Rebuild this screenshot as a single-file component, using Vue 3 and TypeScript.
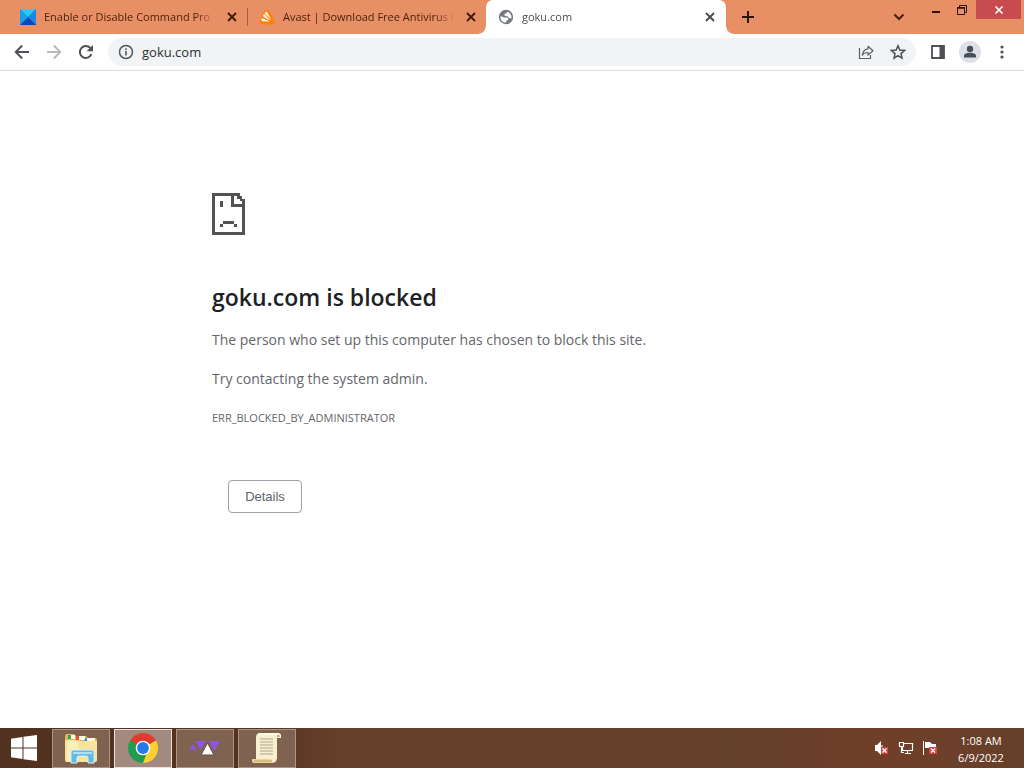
<script setup lang="ts">
import { ref } from 'vue'

interface Tab {
  id: string
  title: string
  icon: 'azure' | 'avast' | 'globe'
}

const tabs: Tab[] = [
  { id: 'cmd', title: 'Enable or Disable Command Pro', icon: 'azure' },
  { id: 'avast', title: 'Avast | Download Free Antivirus (', icon: 'avast' },
  { id: 'goku', title: 'goku.com', icon: 'globe' },
]
const active = ref('goku')
const address = ref('goku.com')
</script>

<template>
  <div class="screen">
    <header class="tabstrip">
      <div v-for="tab in tabs" :key="tab.id" class="tab" :class="{ active: tab.id === active }">
        <svg v-if="tab.icon === 'azure'" class="favicon" viewBox="0 0 16 16" aria-hidden="true">
          <path d="M0 0h16v16H0z" fill="#168de2" />
          <path d="M0 0h16L8 8z" fill="#35c6f4" />
          <path d="M16 0v16L8 8z" fill="#1c86e6" />
          <path d="M0 16 8 8l8 8z" fill="#0b47b4" />
          <path d="M0 0v16l8-8z" fill="#1a9eec" />
        </svg>
        <svg v-else-if="tab.icon === 'avast'" class="favicon" viewBox="0 0 16 16" aria-hidden="true">
          <path d="M6 1.2C7.500 0 9.500.6 10.400 2.500l5 9.600c.8 1.700-.3 3.400-2.200 3.400H3C.8 15.500-.2 13.500.8 11.600L5 2.800z" fill="#ff8108" />
          <path d="M6 4.600c-.4-1.800 1.200-2.600 2.100-1.300l4 7.500zM4.300 6.200c.1-1 1-1.200 1.700-.5l5.500 6.100-6.700-3.800c-.5-.4-.6-1-.5-1.800zM2.400 10.500c-.1-.9.6-1.300 1.500-1l7 3-7-.2c-.9-.1-1.400-.8-1.500-1.800z" fill="#fff" />
        </svg>
        <svg v-else class="favicon" viewBox="0 0 16 16" aria-hidden="true">
          <circle cx="8" cy="8" r="7.200" fill="#75797d" />
          <path d="M9.500 2.800 8.200 4.200 6.500 4.800v1.700L8 7.300h1.700l1 1.700 2.700.4c.5-2.700-.8-5.500-3.900-6.600zM2.400 7.400c-.2 2.800 1.300 5.200 4.200 6.100l1.800-.2v-1.600l1.700-.7.300-1.600-1.700-.9H5.600L4.200 7.500z" fill="#fff" />
        </svg>
        <span class="title">{{ tab.title }}</span>
        <button class="tab-close" type="button" :aria-label="'Close ' + tab.title">
          <svg viewBox="0 0 10 10" width="10" height="10"><path d="m1 1 8 8M9 1 1 9" stroke="currentColor" stroke-width="1.800" /></svg>
        </button>
      </div>
      <button class="new-tab" type="button" aria-label="New tab">
        <svg viewBox="0 0 14 14" width="14" height="14"><path d="M7 1v12M1 7h12" stroke="#2b140a" stroke-width="2" /></svg>
      </button>
      <div class="window-controls">
        <button class="search-tabs" type="button" aria-label="Search tabs">
          <svg viewBox="0 0 12 8" width="12" height="8"><path d="m1.500 1.500 4.500 4.500 4.500-4.500" fill="none" stroke="#43200f" stroke-width="2" /></svg>
        </button>
        <button class="win" type="button" aria-label="Minimize">
          <svg viewBox="0 0 12 12" width="12" height="12"><path d="M2 7h8v2H2z" fill="#2b140a" /></svg>
        </button>
        <button class="win" type="button" aria-label="Restore">
          <svg viewBox="0 0 12 12" width="12" height="12"><path d="M1.500 4h7v6.500h-7zM3.500 3.500v-2h7v7h-2" fill="none" stroke="#2b140a" /><path d="M1 3h8v1.500H1z" fill="#2b140a" /></svg>
        </button>
        <button class="win-close" type="button" aria-label="Close">
          <svg viewBox="0 0 10 10" width="10" height="10"><path d="m1.500 1.500 7 7M8.500 1.500l-7 7" stroke="#fff" stroke-width="1.700" /></svg>
        </button>
      </div>
    </header>

    <nav class="toolbar" aria-label="Browser toolbar">
      <button class="tool" type="button" aria-label="Back">
        <svg viewBox="0 0 16 16" width="16" height="16"><path d="M15 8H2M8.200 1.500 1.700 8l6.500 6.500" fill="none" stroke="#4d5156" stroke-width="1.900" /></svg>
      </button>
      <button class="tool" type="button" aria-label="Forward">
        <svg viewBox="0 0 16 16" width="16" height="16"><path d="M1 8h13M7.800 1.500 14.300 8l-6.500 6.500" fill="none" stroke="#b8babd" stroke-width="1.900" /></svg>
      </button>
      <button class="tool" type="button" aria-label="Reload">
        <svg viewBox="0 0 16 16" width="16" height="16"><path d="M13.400 10.200A6 6 0 1 1 12.400 4l1 1" fill="none" stroke="#4d5156" stroke-width="2" /><path d="M15 1v6.300H8.700z" fill="#4d5156" /></svg>
      </button>
      <div class="omnibox">
        <button class="site-info" type="button" aria-label="View site information">
          <svg viewBox="0 0 16 16" width="16" height="16"><circle cx="8" cy="8" r="6.500" fill="none" stroke="#55595e" stroke-width="1.500" /><path d="M7.200 7h1.600v4.500H7.200zM7.200 4.300h1.600v1.600H7.200z" fill="#55595e" /></svg>
        </button>
        <input v-model="address" class="address" type="text" aria-label="Address and search bar" spellcheck="false" />
        <button class="tool" type="button" aria-label="Share this page">
          <svg viewBox="0 0 16 16" width="16" height="16"><path d="M1.500 4v10.500h11V11" fill="none" stroke="#5b5f64" stroke-width="1.200" /><path d="M10 2.300 15 6.700l-5 4.300V8.500c-2.600 0-4.300.8-5.700 2.700.5-3.500 2.500-5.900 5.700-6.300z" fill="none" stroke="#5b5f64" stroke-width="1.200" stroke-linejoin="round" /></svg>
        </button>
        <button class="tool" type="button" aria-label="Bookmark this tab">
          <svg viewBox="0 0 16 16" width="16" height="16"><path d="m8 1.800 1.800 4.300 4.700.4L11 9.600l1 4.600-4-2.500-4 2.500 1-4.600-3.500-3.100 4.700-.4z" fill="none" stroke="#4d5156" stroke-width="1.500" /></svg>
        </button>
      </div>
      <button class="tool" type="button" aria-label="Side panel">
        <svg viewBox="0 0 16 16" width="16" height="16"><path d="M2 2h12v12H2z" fill="none" stroke="#4d5156" stroke-width="1.800" /><path d="M9.500 1.500H14v13H9.500z" fill="#4d5156" /></svg>
      </button>
      <button class="tool" type="button" aria-label="Profile">
        <svg viewBox="0 0 22 22" width="22" height="22"><circle cx="11" cy="11" r="11" fill="#dde1e7" /><circle cx="11" cy="8" r="3.200" fill="#46505c" /><path d="M5 16.500v-1.700c0-2.200 3.600-3 6-3s6 .8 6 3v1.700z" fill="#46505c" /></svg>
      </button>
      <button class="tool" type="button" aria-label="Menu">
        <svg viewBox="0 0 4 16" width="4" height="16"><g fill="#4d5156"><circle cx="2" cy="3" r="1.600" /><circle cx="2" cy="8" r="1.600" /><circle cx="2" cy="13" r="1.600" /></g></svg>
      </button>
    </nav>

    <main class="page">
      <div class="error">
        <svg class="sad" viewBox="0 0 12 15" preserveAspectRatio="none" shape-rendering="crispEdges" aria-hidden="true">
          <path d="M0 0h10v1h1v1h1v13H0zM1 1v13h10V5H7V1zM8 1v3h3V3h-1V2H9V1z" fill="#535353" fill-rule="evenodd" />
          <path d="M3 3h1v2H3zM4 10h4v1H4zM3 11h1v1H3zM8 11h1v1H8z" fill="#535353" />
        </svg>
        <h1>goku.com is blocked</h1>
        <p>The person who set up this computer has chosen to block this site.</p>
        <p>Try contacting the system admin.</p>
        <div class="code">ERR_BLOCKED_BY_ADMINISTRATOR</div>
        <button class="details" type="button">Details</button>
      </div>
    </main>

    <footer class="taskbar">
      <button class="start" type="button" aria-label="Start">
        <svg viewBox="0 0 26 26" width="26" height="26"><path d="M0 3.700 11.500 2v10.500H0zM12.500 1.800 26 0v12.500H12.500zM0 13.500h11.500V24L0 22.300zM12.500 13.500H26V26l-13.500-1.800z" fill="#fff" /></svg>
      </button>
      <button class="task" type="button" aria-label="File Explorer">
        <svg viewBox="0 0 34 32" width="34" height="32">
          <path d="M1 4q0-2 2-2h7l2 2h10l2 2h7q2 0 2 2v20q0 2-2 2H3q-2 0-2-2z" fill="#d9b75c" />
          <path d="M4 3h6v4H4z" fill="#3ba34d" /><path d="M12 4h7v4h-7z" fill="#e05236" /><path d="M20 6h9v4h-9z" fill="#3a8bd8" />
          <path d="M7 3h4v4H7zM15 4h6v4h-6zM23 6h8v4h-8z" fill="#fff9e4" />
          <path d="M1 8h12l3 1h17v19q0 2-2 2H3q-2 0-2-2z" fill="#f7e39b" />
          <path d="M3 9h11v20H3z" fill="#fbefb9" />
          <path d="M7 31V20q0-2 2-2h19q2 0 2 2v11h-6v-5q0-2-2-2h-7q-2 0-2 2v5z" fill="#65b9e5" stroke="#d1f2fc" />
          <path d="M9 20h19v2H9z" fill="#a9e1f8" />
        </svg>
      </button>
      <button class="task current" type="button" aria-label="Google Chrome">
        <svg viewBox="0 0 30 30" width="30" height="30">
          <path d="M15 15 2.010 7.500a15 15 0 0 1 25.980 0z" fill="#e23b2e" />
          <path d="M15 15V30A15 15 0 0 1 2.010 7.500z" fill="#249c4d" />
          <path d="M15 15 28 7.500A15 15 0 0 1 15 30z" fill="#fcd02e" />
          <path d="M15 8h13.300l-.3-.5H8L15 15z" fill="#e23b2e" />
          <path d="m2 7.500 6.900 11L15 15z" fill="#249c4d" />
          <path d="m15 30 6.100-11.500L15 15z" fill="#fcd02e" />
          <path d="m15 30-6-11.500h6l3 3.500z" fill="#249c4d" />
          <circle cx="15" cy="15" r="7.300" fill="#fff" /><circle cx="15" cy="15" r="5.900" fill="#267be9" />
        </svg>
      </button>
      <button class="task" type="button" aria-label="Triangles">
        <svg viewBox="0 0 32 16" width="32" height="16"><path d="m0 10 4-6 4 6zM6 1h11l-5.500 9zM20 1h11l-5.500 10z" fill="#8a58da" /><path d="m12 15 6.500-12L25 15z" fill="#fff" stroke="#674b44" /></svg>
      </button>
      <button class="task" type="button" aria-label="Script">
        <svg viewBox="0 0 30 30" width="30" height="30">
          <path d="M7 0h18q4 0 4 3v2h-4v20q0 4-4 5H3q-3 0-3-3v-1h4V4q0-3 3-4z" fill="#f8eed0" />
          <path d="M7 0h18q4 0 4 3v2h-4q0-3-3-3H6z" fill="#fff9e6" /><path d="M25 2q3-1 3 2h-3z" fill="#c6b079" />
          <path d="M0 26h19q0 3 3 3l-1 1H3q-3 0-3-3z" fill="#e6d49b" /><path d="M2 28h18" stroke="#bda66b" />
          <path d="M8 6h13M8 9h13M8 12h13M8 15h13M8 18h13M8 21h13" stroke="#b0a58e" />
        </svg>
      </button>
      <div class="tray">
        <button type="button" aria-label="Volume muted">
          <svg viewBox="0 0 16 16" width="16" height="16"><path d="M1 5h2l4-4v14l-4-4H1z" fill="#fff" /><path d="M8 5v6" stroke="#fff" /><path d="M7 7h7v7H7z" fill="#d34545" /><path d="m8.500 8.500 4 4m0-4-4 4" stroke="#fff" stroke-width="1.300" /></svg>
        </button>
        <button type="button" aria-label="Network">
          <svg viewBox="0 0 16 16" width="16" height="16"><path d="M5 3.500h9.500v7H4.500V7M7 13.500h6M9.500 11v3M1.500 2.500h4v4h-4zM3.500 7v5.500H6" fill="none" stroke="#fff" stroke-width="1.200" /></svg>
        </button>
        <button type="button" aria-label="Action Center">
          <svg viewBox="0 0 16 16" width="16" height="16"><path d="M1.500 1v14" stroke="#fff" /><path d="M3 2h5l2 2h4v5H8L7 8H3z" fill="#fff" /><path d="M7 7h8v7H7z" fill="#d34545" /><path d="m9 8.500 4 4m0-4-4 4" stroke="#fff" stroke-width="1.300" /></svg>
        </button>
      </div>
      <div class="clock"><span>1:08 AM</span><span>6/9/2022</span></div>
    </footer>
  </div>
</template>

<style>
html,
body {
  margin: 0;
  background: #fff;
}
</style>

<style scoped>
.screen {
  display: flex;
  flex-direction: column;
  min-height: 100vh;
  font-family: "Open Sans", "Noto Sans", sans-serif;
}
.screen *,
.screen {
  box-sizing: border-box;
}
button {
  display: flex;
  align-items: center;
  justify-content: center;
  margin: 0;
  padding: 0;
  border: 0;
  background: none;
  font: inherit;
  flex: none;
}
svg {
  display: block;
  flex: none;
}
.tabstrip {
  display: flex;
  height: 34px;
  padding-left: 8px;
  background: #e88f65;
}
.tab {
  display: flex;
  flex: 0 1 240px;
  min-width: 0;
  align-items: center;
  padding: 0 8px 0 12px;
  color: #4b2411;
  position: relative;
}
.tab:first-child::after {
  content: "";
  position: absolute;
  right: 0;
  top: 8px;
  width: 1px;
  height: 18px;
  background: #a35d3c;
}
.tab:nth-child(2) {
  flex-basis: 238px;
  padding-left: 11px;
  padding-right: 7px;
}
.tab.active {
  background: #fff;
  border-radius: 7px 7px 0 0;
  color: #4a4d51;
}
.tab.active::before,
.tab.active::after {
  content: "";
  position: absolute;
  bottom: 0;
  width: 7px;
  height: 7px;
}
.tab.active::before {
  right: 100%;
  background: radial-gradient(circle at 0 0, #e88f65 6px, #fff 7px);
}
.tab.active::after {
  left: 100%;
  background: radial-gradient(circle at 100% 0, #e88f65 6px, #fff 7px);
}
.favicon {
  width: 16px;
  height: 16px;
}
.title {
  flex: 1;
  min-width: 0;
  margin: 0 8px;
  overflow: hidden;
  white-space: nowrap;
  font-size: 11px;
  line-height: 16px;
  mask-image: linear-gradient(to left, transparent, #000 20px);
}
.tab-close {
  width: 16px;
  height: 16px;
  color: #3b1b0d;
}
.active .tab-close {
  color: #44474b;
}
.new-tab {
  width: 28px;
  height: 34px;
  margin-left: 8px;
}
.window-controls {
  display: flex;
  align-items: flex-start;
  margin-left: auto;
  padding-right: 3px;
}
.search-tabs {
  width: 28px;
  height: 34px;
  margin-right: 10px;
}
.win {
  width: 26px;
  height: 19px;
}
.win-close {
  width: 45px;
  height: 19px;
  margin-left: 1px;
  background: #c84b50;
}
.toolbar {
  display: flex;
  align-items: center;
  height: 37px;
  padding: 0 6px;
  border-bottom: 1px solid #d9dbde;
  background: #fff;
}
.tool {
  width: 32px;
  height: 28px;
}
.omnibox {
  display: flex;
  flex: 1;
  min-width: 0;
  align-items: center;
  height: 28px;
  margin: 0 6px;
  padding: 0 2px 0 10px;
  border-radius: 14px;
  background: #f1f3f4;
}
.site-info {
  width: 16px;
  height: 28px;
}
.address {
  flex: 1;
  min-width: 0;
  padding: 0 8px;
  border: 0;
  outline: 0;
  background: none;
  color: #2c2e33;
  font: 13px/20px "Open Sans", "Noto Sans", sans-serif;
}
.page {
  flex: 1;
  background: #fff;
}
.error {
  width: 100%;
  max-width: 600px;
  margin: 0 auto;
  padding-top: 122px;
  color: #63666a;
}
.sad {
  width: 33px;
  height: 42px;
}
h1 {
  margin: 46px 0 15px;
  color: #202124;
  font-size: 23px;
  font-weight: 600;
  line-height: 32px;
}
p {
  margin: 0 0 15px;
  font-size: 14px;
  line-height: 24px;
}
.code {
  font-size: 11px;
  line-height: 24px;
}
.details {
  width: 74px;
  height: 33px;
  margin: 50px 0 24px 16px;
  border: 1px solid #9da0a4;
  border-radius: 4px;
  color: #606367;
  font: 13px/16px "Liberation Sans", Arial, sans-serif;
}
.taskbar {
  display: flex;
  align-items: center;
  gap: 4px;
  height: 40px;
  background: linear-gradient(90deg, #51311f, #563222 24%, #653f29 33%, #643f2a 72%, #703f29 87%, #66402a);
}
.start {
  width: 48px;
  height: 40px;
}
.task {
  width: 58px;
  height: 39px;
  border: 1px solid #ad9487;
  background: #806251;
}
.task.current {
  border-color: #eee0da;
  background: #a28a80;
}
.tray {
  display: flex;
  gap: 8px;
  margin-left: auto;
}
.clock {
  display: flex;
  flex-direction: column;
  align-items: center;
  width: 82px;
  padding: 2px 4px 0 0;
  color: #fff;
  font-size: 11px;
  line-height: 17px;
}
</style>
